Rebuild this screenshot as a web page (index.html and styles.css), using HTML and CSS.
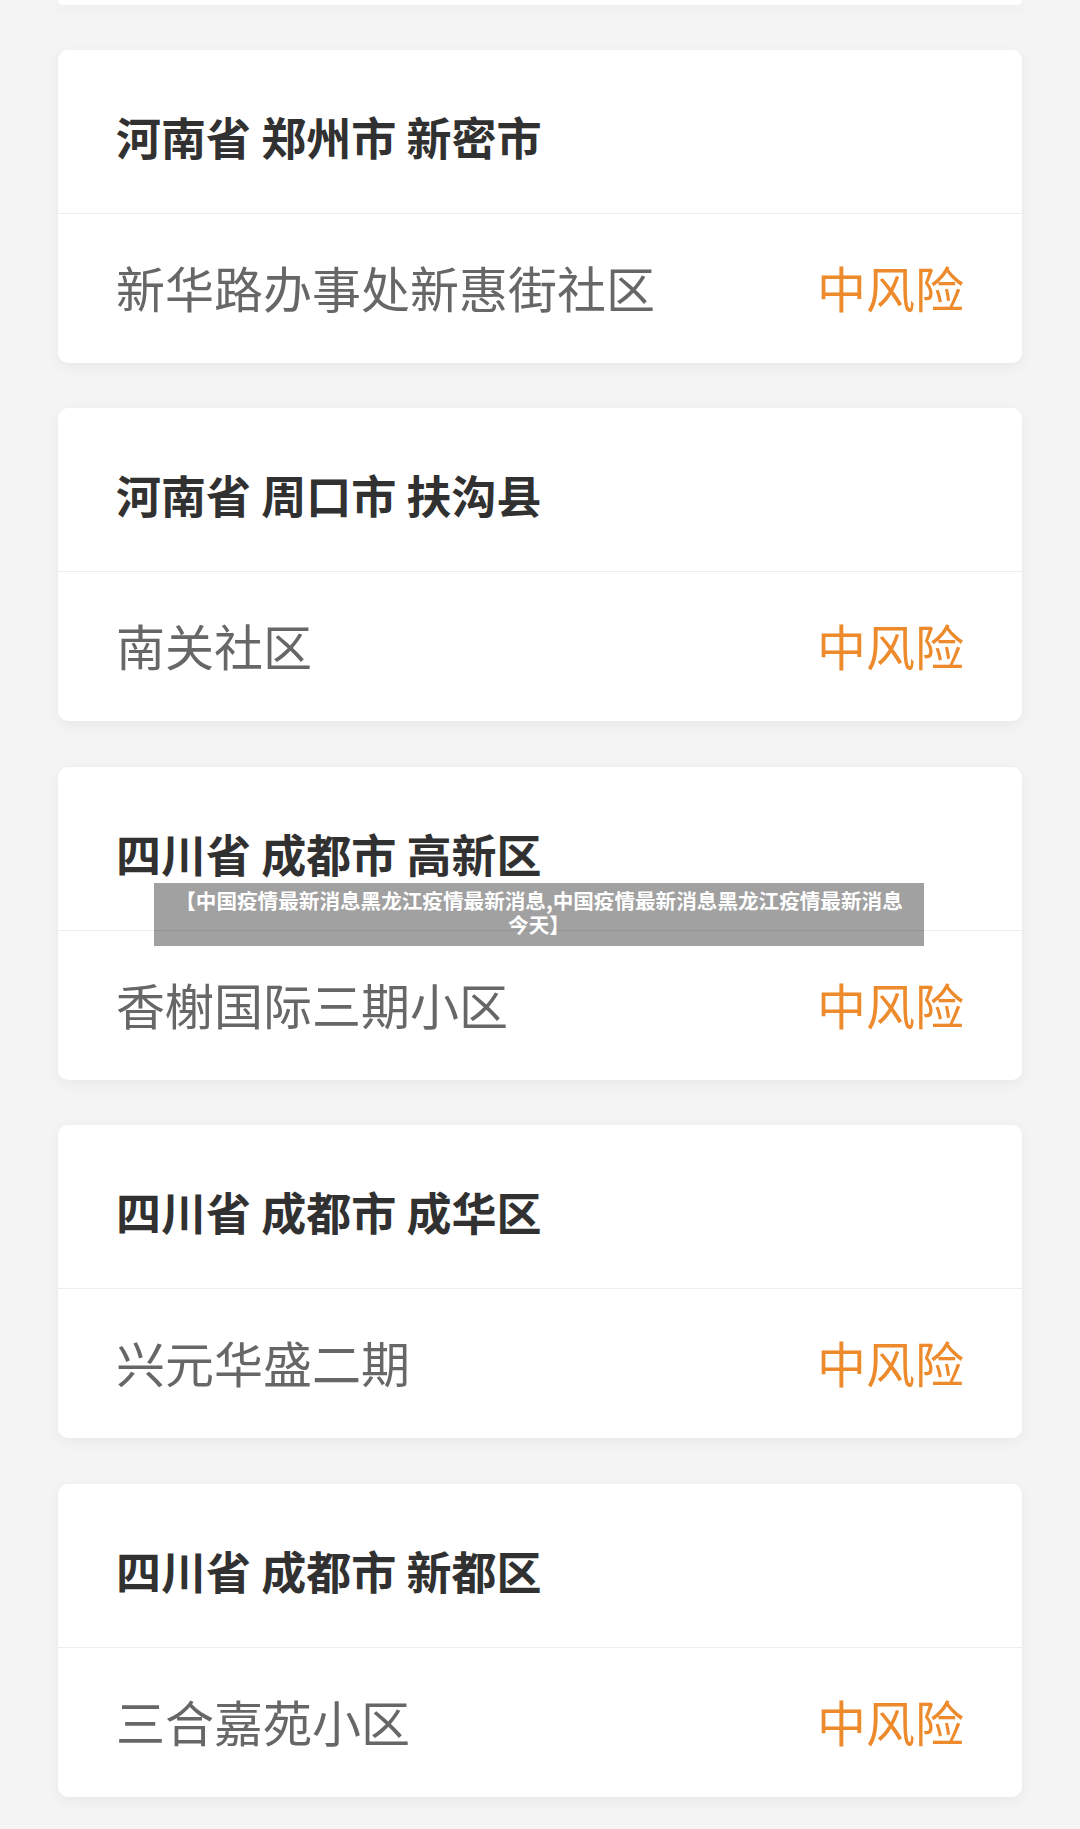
FILE: index.html
```html
<!DOCTYPE html>
<html lang="zh-CN">
<head>
  <meta charset="UTF-8">
  <meta name="viewport" content="width=device-width, initial-scale=1.0">
  <title>中国疫情最新消息</title>
  <link rel="stylesheet" href="styles.css">
</head>
<body>

  <div class="page">
    <div class="card-tail"></div>

    <div class="card">
      <div class="card-head">河南省 郑州市 新密市</div>
      <div class="card-row">
        <span class="place">新华路办事处新惠街社区</span>
        <span class="risk">中风险</span>
      </div>
    </div>

    <div class="card">
      <div class="card-head">河南省 周口市 扶沟县</div>
      <div class="card-row">
        <span class="place">南关社区</span>
        <span class="risk">中风险</span>
      </div>
    </div>

    <div class="card">
      <div class="card-head">四川省 成都市 高新区</div>
      <div class="card-row">
        <span class="place">香榭国际三期小区</span>
        <span class="risk">中风险</span>
      </div>
    </div>

    <div class="card">
      <div class="card-head">四川省 成都市 成华区</div>
      <div class="card-row">
        <span class="place">兴元华盛二期</span>
        <span class="risk">中风险</span>
      </div>
    </div>

    <div class="card">
      <div class="card-head">四川省 成都市 新都区</div>
      <div class="card-row">
        <span class="place">三合嘉苑小区</span>
        <span class="risk">中风险</span>
      </div>
    </div>
  </div>

  <div class="caption">【中国疫情最新消息黑龙江疫情最新消息,中国疫情最新消息黑龙江疫情最新消息今天】</div>

</body>
</html>
```

FILE: styles.css
```css
body {
  font-family: "Noto Sans CJK SC", "Noto Sans", sans-serif;
  margin: 0;
  padding: 0;
  background-color: #f4f4f4;
  position: relative;
  height: 1829px;
  overflow: hidden;
}

.page {
  padding: 0 58px;
}

.card-tail {
  height: 5px;
  background-color: #fff;
  border-radius: 0 0 10px 10px;
  box-shadow: 0 4px 12px rgba(0, 0, 0, 0.05);
  margin-bottom: 45px;
}

.card {
  background-color: #fff;
  border-radius: 10px;
  box-shadow: 0 4px 14px rgba(0, 0, 0, 0.05);
  margin-bottom: 45.4px;
}

.card-head {
  height: 164px;
  box-sizing: border-box;
  padding: 64px 58px 0;
  border-bottom: 1px solid #ececec;
  font-size: 45px;
  line-height: 1;
  font-weight: 700;
  color: #313131;
}

.card-row {
  height: 149px;
  box-sizing: border-box;
  padding: 48px 58px 0;
  display: flex;
  justify-content: space-between;
  font-size: 49px;
  line-height: 1;
}

.place {
  color: #676767;
}

.risk {
  color: #ec8a2c;
}

.caption {
  position: absolute;
  top: 883px;
  left: 154px;
  width: 770px;
  height: 63px;
  box-sizing: border-box;
  padding: 5px 16px 0;
  background-color: rgba(0, 0, 0, 0.37);
  color: #fff;
  font-size: 20.6px;
  line-height: 24px;
  font-weight: 700;
  text-align: center;
}
```
